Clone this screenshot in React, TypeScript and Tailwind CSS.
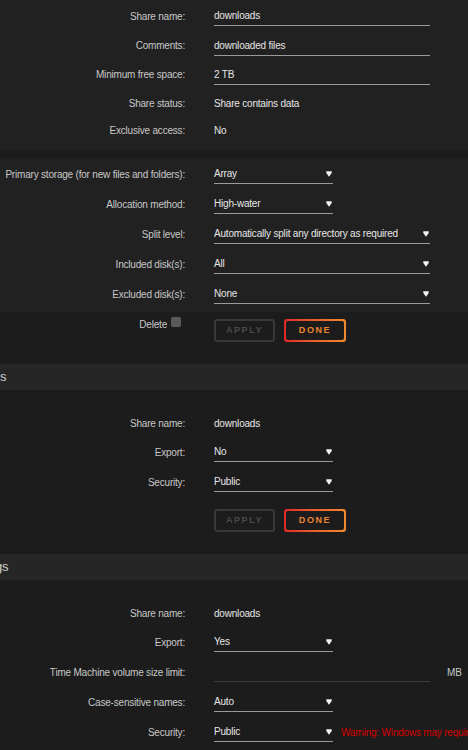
import React from "react";

type Kind = "text" | "input" | "select" | "selectWide" | "faint";

interface RowProps {
  label: string;
  value?: string;
  kind?: Kind;
  h?: string;
  after?: React.ReactNode;
}

const Arrow = () => (
  <svg width="6" height="6" viewBox="0 0 6 6" className="shrink-0">
    <path d="M0.3 0.3 H5.7 V2 L3 5.8 L0.3 2 Z" fill="#f2f2f2" />
  </svg>
);

const Row = ({ label, value = "", kind = "text", h = "h-[30px]", after }: RowProps) => {
  const box =
    kind === "select"
      ? "w-[119px] border-b border-[#9a9a9a]"
      : kind === "selectWide" || kind === "input"
      ? "w-[216px] border-b border-[#9a9a9a]"
      : kind === "faint"
      ? "w-[216px] border-b border-[#3c3c3c]"
      : "";
  return (
    <div className={`flex items-center ${h}`}>
      <div className="w-[185px] shrink-0 text-right text-[#c8c8c8] whitespace-nowrap">{label}</div>
      <div className={`ml-[29px] flex h-[20px] shrink-0 items-center justify-between pr-[1px] ${box}`}>
        <span className="text-[#e6e6e6] whitespace-nowrap">{value}</span>
        {(kind === "select" || kind === "selectWide") && <Arrow />}
      </div>
      {after}
    </div>
  );
};

const Buttons = () => (
  <div className="flex gap-[9px]">
    <div className="flex h-[23px] w-[61px] items-center justify-center rounded-[3px] border-2 border-[#383838] text-[9px] font-bold tracking-[1.6px] text-[#4a4a4a]">
      APPLY
    </div>
    <div className="h-[23px] w-[62px] rounded-[3px] bg-gradient-to-r from-[#e0262a] to-[#f28a2e] p-[2px]">
      <div className="flex h-full w-full items-center justify-center rounded-[2px] bg-[#1c1c1c] text-[9px] font-bold tracking-[1.6px] text-[#ee8530]">
        DONE
      </div>
    </div>
  </div>
);

const Header = ({ tail, shift }: { tail: string; shift: string }) => (
  <div className="flex h-[26px] items-center bg-[#262626] text-[13px] text-[#cfcfcf]">
    <span className={shift}>{tail}</span>
  </div>
);

export default function App() {
  return (
    <div
      className="min-h-screen w-full overflow-hidden bg-[#1c1c1c] text-[10px] tracking-[-0.2px]"
      style={{ fontFamily: '"Liberation Sans", Arial, sans-serif' }}
    >
      {/* share settings */}
      <div className="bg-[#212121] pt-[1px] pb-[7px]">
        <Row label="Share name:" value="downloads" kind="input" />
        <Row label="Comments:" value="downloaded files" kind="input" h="h-[29px]" />
        <Row label="Minimum free space:" value="2 TB" kind="input" h="h-[29px]" />
        <Row label="Share status:" value="Share contains data" h="h-[28px]" />
        <Row label="Exclusive access:" value="No" h="h-[27px]" />
      </div>

      <div className="mt-[7px] bg-[#212121] pt-[1px] pb-[3px]">
        <Row label="Primary storage (for new files and folders):" value="Array" kind="select" />
        <Row label="Allocation method:" value="High-water" kind="select" />
        <Row label="Split level:" value="Automatically split any directory as required" kind="selectWide" />
        <Row label="Included disk(s):" value="All" kind="selectWide" />
        <Row label="Excluded disk(s):" value="None" kind="selectWide" />
      </div>

      <div className="flex pt-[7px]">
        <div className="flex w-[185px] shrink-0 items-start justify-end gap-[4px] pr-[4px]">
          <span className="mt-[-2px] text-[#c8c8c8]">Delete</span>
          <span className="mt-[-2px] h-[10px] w-[10px] rounded-[2px] bg-[#5a5a5a]" />
        </div>
        <div className="ml-[29px]">
          <Buttons />
        </div>
      </div>

      <div className="mt-[22px]">
        <Header tail="s" shift="ml-0" />
      </div>

      <div className="pt-[19px]">
        <Row label="Share name:" value="downloads" h="h-[28px]" />
        <Row label="Export:" value="No" kind="select" />
        <Row label="Security:" value="Public" kind="select" />
        <div className="ml-[214px] mt-[12px]">
          <Buttons />
        </div>
      </div>

      <div className="mt-[22px]">
        <Header tail="gs" shift="-ml-[5px]" />
      </div>

      <div className="pt-[19px] pb-[40px]">
        <Row label="Share name:" value="downloads" h="h-[28px]" />
        <Row label="Export:" value="Yes" kind="select" />
        <Row
          label="Time Machine volume size limit:"
          kind="faint"
          after={<span className="ml-[17px] text-[#c8c8c8]">MB</span>}
        />
        <Row label="Case-sensitive names:" value="Auto" kind="select" />
        <Row
          label="Security:"
          value="Public"
          kind="select"
          after={
            <span className="ml-[8px] whitespace-nowrap text-[#d40000]">
              Warning: Windows may require a valid username and password to access this share
            </span>
          }
        />
      </div>
    </div>
  );
}
